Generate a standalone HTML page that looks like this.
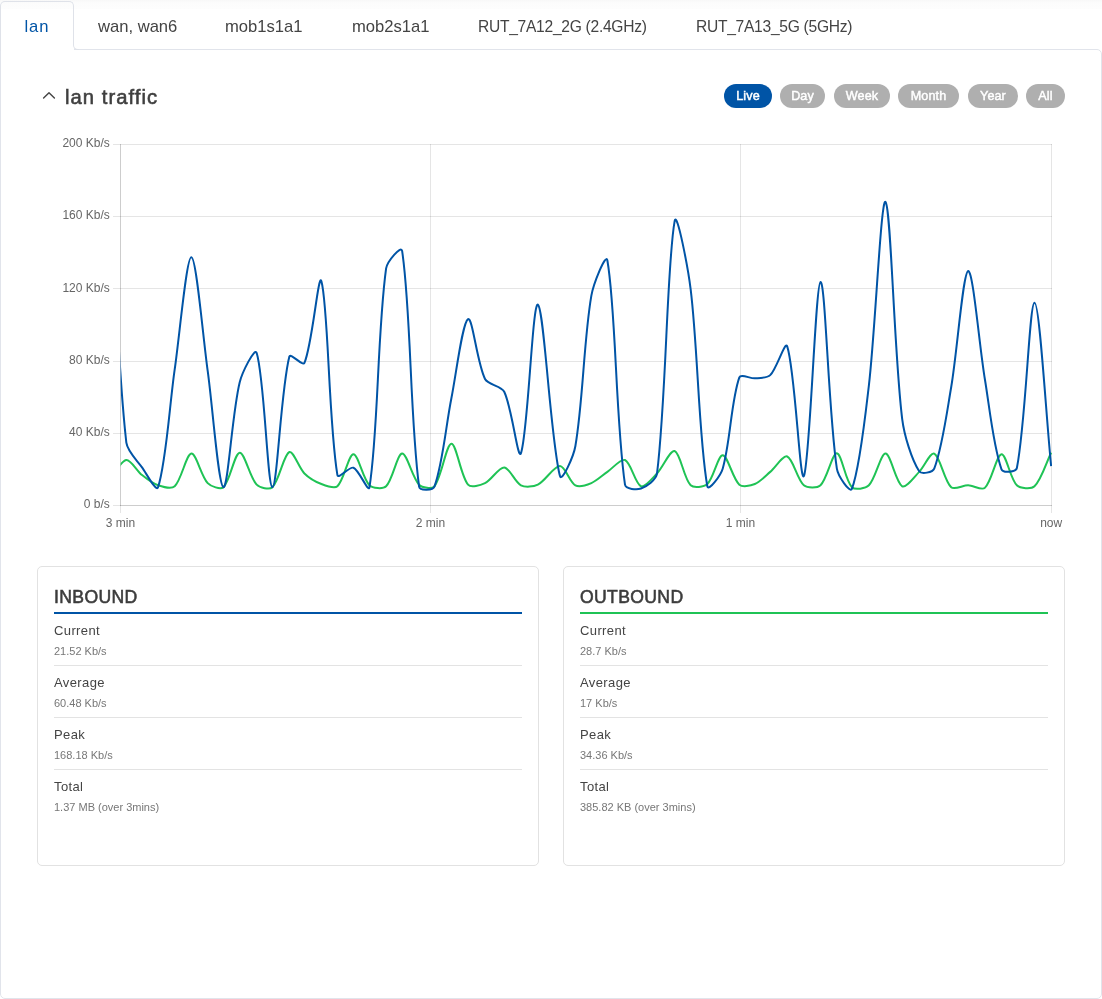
<!DOCTYPE html>
<html lang="en">
<head>
<meta charset="utf-8">
<title>lan traffic</title>
<style>
*{box-sizing:border-box;margin:0;padding:0}
html,body{width:1102px;height:999px;background:#fff;overflow:hidden}
body{position:relative;will-change:transform;font-family:"Liberation Sans","DejaVu Sans",sans-serif;color:#444}
.topshade{position:absolute;left:0;top:0;width:1102px;height:9px;background:linear-gradient(#f8f8f8,#fcfcfc 30%,#fdfdfd)}
.tabs{position:absolute;left:0;top:1px;height:49px;width:1102px;white-space:nowrap}
.tab{position:absolute;top:0;height:49px;line-height:51px;font-size:16.6px;color:#444;white-space:nowrap}
.tab.rut{font-size:15.6px;letter-spacing:-.28px}
.tab.active{left:0;width:74px;border:1px solid #dfe2e9;border-bottom:none;border-radius:5px 5px 0 0;background:linear-gradient(transparent 10px,#fff 10px);color:#0054a6;z-index:3;height:50px}
.tab.active span{position:absolute;left:23.4px;top:-1px;letter-spacing:1px}
.j1{position:absolute;left:73px;top:45px;width:1px;height:6px;background:#fff;z-index:5}
.j2{position:absolute;left:73px;top:44px;width:6px;height:6px;border-left:1px solid #dfe2e9;border-bottom:1px solid #dfe2e9;border-bottom-left-radius:5px;z-index:6}
.panel{position:absolute;left:0;top:49px;width:1102px;height:950px;border:1px solid #e1e4eb;border-radius:0 5px 5px 5px;background:#fff;z-index:1}
.h{position:absolute;left:65px;top:84px;font-size:20.2px;font-weight:normal;-webkit-text-stroke:.6px #3f3f3f;letter-spacing:1.05px;color:#3f3f3f;line-height:26px;z-index:4;white-space:nowrap}
.chev{position:absolute;left:41px;top:89px;z-index:4}
.btn{position:absolute;top:84px;height:24px;border-radius:12px;background:#afafaf;color:#fff;font-size:12.6px;font-weight:normal;-webkit-text-stroke:.45px #fff;letter-spacing:.1px;text-align:center;line-height:25px;z-index:4}
.btn.on{background:#0054a6}
svg.chart{position:absolute;left:0;top:0;z-index:4}
.card{position:absolute;top:566px;width:502px;height:300px;border:1px solid #e2e2e2;border-radius:5px;background:#fff;z-index:4}
.card h3{position:absolute;left:16px;top:19px;font-size:17.6px;font-weight:normal;-webkit-text-stroke:.55px #3c3c3c;letter-spacing:.35px;color:#3c3c3c;line-height:22px;white-space:nowrap}
.card .rule{position:absolute;left:16px;right:16px;top:45px;height:2px;background:#0054a6}
.card.out .rule{background:#1fc355}
.row{position:absolute;left:16px;right:16px;height:52px;border-bottom:1px solid #e3e3e3}
.row.last{border-bottom:none}
.row .k{position:absolute;left:0;top:8px;font-size:13px;letter-spacing:.38px;line-height:18px;color:#444;white-space:nowrap}
.row .v{position:absolute;left:0;top:30px;font-size:11px;line-height:14px;color:#777;white-space:nowrap}
</style>
</head>
<body>
<div class="topshade"></div>
<div class="tabs">
  <div class="tab active"><span>lan</span></div>
  <div class="tab" style="left:98px">wan, wan6</div>
  <div class="tab" style="left:225px">mob1s1a1</div>
  <div class="tab" style="left:352px">mob2s1a1</div>
  <div class="tab rut" style="left:478px">RUT_7A12_2G (2.4GHz)</div>
  <div class="tab rut" style="left:696px">RUT_7A13_5G (5GHz)</div>
</div>
<div class="panel"></div>
<div class="j1"></div><div class="j2"></div>
<svg class="chev" width="16" height="14" viewBox="0 0 16 14"><path d="M2.6 9.1 L8 3.7 L13.4 9.1" fill="none" stroke="#444" stroke-width="1.4" stroke-linecap="round" stroke-linejoin="round"/></svg>
<div class="h">lan traffic</div>
<div class="btn on" style="left:724px;width:48px">Live</div>
<div class="btn" style="left:780px;width:45px">Day</div>
<div class="btn" style="left:834px;width:56px">Week</div>
<div class="btn" style="left:898px;width:61px">Month</div>
<div class="btn" style="left:968px;width:50px">Year</div>
<div class="btn" style="left:1026px;width:39px">All</div>

<svg class="chart" width="1102" height="560" viewBox="0 0 1102 560">
  <defs><clipPath id="ca"><rect x="120.6" y="140" width="931.4" height="370"/></clipPath></defs>
  <g stroke="#000" stroke-opacity="0.1" stroke-width="1" shape-rendering="crispEdges">
    <line x1="113" y1="144.5" x2="1052" y2="144.5"/>
    <line x1="113" y1="216.5" x2="1052" y2="216.5"/>
    <line x1="113" y1="288.5" x2="1052" y2="288.5"/>
    <line x1="113" y1="361.5" x2="1052" y2="361.5"/>
    <line x1="113" y1="433.5" x2="1052" y2="433.5"/>
    <line x1="113" y1="505.5" x2="1052" y2="505.5"/>
    <line x1="120.5" y1="144" x2="120.5" y2="513"/>
    <line x1="430.5" y1="144" x2="430.5" y2="513"/>
    <line x1="740.5" y1="144" x2="740.5" y2="513"/>
    <line x1="1051.5" y1="144" x2="1051.5" y2="513"/>
    <line x1="120.5" y1="144" x2="120.5" y2="506"/>
    <line x1="120" y1="505.5" x2="1052" y2="505.5"/>
  </g>
  <g clip-path="url(#ca)" fill="none" stroke-width="2" stroke-linejoin="round">
    <path stroke="#1fc355" d="M110.40,478.00C115.18,472.61 121.35,460.48 126.34,460.02C130.84,459.60 136.96,471.02 142.03,475.07C146.47,478.61 152.83,483.53 158.05,485.32C162.63,486.90 171.58,489.26 174.70,486.28C181.57,479.75 186.20,454.11 191.36,453.61C196.10,453.15 201.21,476.27 207.69,483.08C210.82,486.36 220.53,489.97 223.39,487.25C230.13,480.84 234.59,453.05 239.72,452.65C244.59,452.28 249.89,477.47 256.70,484.68C259.69,487.85 269.56,490.08 272.40,487.25C279.36,480.28 283.62,454.49 289.37,452.01C293.23,450.35 298.98,468.02 304.43,473.47C308.58,477.63 315.93,481.92 321.40,484.04C325.83,485.76 334.43,489.06 337.42,486.28C344.04,480.13 348.57,454.40 353.43,454.25C358.18,454.11 362.81,478.82 369.45,485.32C372.62,488.43 383.02,489.28 386.11,486.28C392.83,479.76 397.10,453.86 402.12,453.61C407.00,453.38 412.35,477.85 419.10,484.68C422.03,487.65 431.98,489.38 434.41,486.28C441.67,477.08 446.26,443.93 451.39,443.68C456.35,443.45 460.76,476.15 468.05,484.68C470.85,487.97 480.60,485.19 485.02,483.08C491.46,480.01 498.82,467.05 504.24,467.39C509.59,467.72 514.94,482.26 520.90,485.32C525.03,487.45 533.53,486.82 537.87,484.68C545.25,481.05 553.91,466.00 559.97,466.11C565.15,466.19 569.67,482.25 575.35,485.32C579.08,487.34 587.01,484.91 591.36,483.08C596.62,480.87 602.54,475.19 607.38,471.87C612.63,468.27 620.88,458.25 625.00,460.02C630.97,462.58 635.25,483.86 641.01,486.28C644.86,487.90 652.81,477.89 657.03,473.47C662.90,467.32 670.31,449.52 674.64,451.05C680.40,453.08 683.86,478.46 690.66,485.32C693.66,488.36 704.06,487.10 707.32,484.04C713.67,478.07 717.97,455.12 722.69,455.21C727.58,455.31 732.73,478.75 739.35,484.68C742.38,487.40 750.76,485.74 754.86,484.04C760.03,481.90 765.76,475.68 770.23,471.87C775.46,467.42 783.10,454.85 787.21,456.50C793.19,458.89 797.20,479.56 803.87,485.32C807.20,488.21 817.39,488.37 820.52,485.32C827.29,478.76 832.23,453.01 836.86,453.29C841.64,453.59 845.33,480.66 851.91,487.25C854.94,490.27 865.63,488.58 868.89,485.32C875.72,478.49 880.61,453.47 885.54,453.61C890.60,453.76 895.92,482.88 902.20,486.28C906.01,488.35 914.52,476.62 919.18,471.87C924.13,466.82 930.52,451.83 934.23,453.61C940.13,456.45 944.20,480.70 951.21,487.25C954.39,490.21 963.10,485.23 968.18,485.32C973.19,485.42 981.74,490.77 984.84,487.89C991.74,481.45 996.50,454.65 1001.50,454.25C1006.11,453.88 1010.31,478.96 1016.87,485.32C1020.21,488.56 1031.20,489.42 1034.49,486.28C1041.48,479.62 1046.15,462.74 1051.14,452.65"/>
    <path stroke="#0054a6" d="M110.40,192.00C115.18,267.22 117.84,368.72 126.34,442.72C127.32,451.33 136.95,460.25 142.03,467.39C146.46,473.61 156.32,492.43 158.05,487.25C166.12,463.03 169.58,404.72 174.70,369.37C179.58,335.72 186.44,257.03 191.36,257.26C196.34,257.51 202.94,336.84 207.69,370.97C212.55,405.83 218.35,485.48 223.39,487.25C227.96,488.84 232.14,412.75 239.72,382.18C242.13,372.49 254.74,346.74 256.70,353.04C264.54,378.26 267.43,486.71 272.40,487.25C277.24,487.77 280.82,389.73 289.37,356.56C290.43,352.44 302.85,366.67 304.43,362.97C312.46,344.09 318.43,271.19 321.40,281.29C328.33,304.82 328.61,423.80 337.42,475.07C338.22,479.72 349.48,466.21 353.43,467.71C359.09,469.86 368.44,493.42 369.45,487.25C378.24,433.65 377.26,332.45 386.11,268.48C387.06,261.53 401.21,244.87 402.12,250.86C411.11,310.31 410.00,420.19 419.10,486.60C419.69,490.91 433.01,490.46 434.41,486.60C442.69,463.94 446.07,424.68 451.39,398.20C456.16,374.42 462.35,322.34 468.05,319.08C472.44,316.58 477.10,363.07 485.02,378.98C487.96,384.88 501.38,385.86 504.24,391.79C512.14,408.16 517.88,461.10 520.90,453.29C527.97,434.96 532.43,301.50 537.87,304.67C544.16,308.33 550.56,440.46 559.97,476.03C561.80,482.94 573.64,456.05 575.35,446.25C583.06,401.95 583.71,340.09 591.36,295.70C593.32,284.35 605.90,252.14 607.38,260.47C615.99,308.84 615.60,420.93 625.00,484.68C625.69,489.35 636.90,489.97 641.01,488.53C646.51,486.60 656.22,479.89 657.03,473.47C666.31,399.65 666.74,264.34 674.64,221.07C676.83,209.09 688.09,268.47 690.66,289.30C697.90,348.04 698.72,438.16 707.32,486.28C708.33,491.98 720.76,475.24 722.69,468.67C730.37,442.57 731.08,400.59 739.35,377.38C740.73,373.49 750.25,378.68 754.86,378.34C759.52,378.00 767.13,378.21 770.23,375.14C776.84,368.60 785.15,340.14 787.21,346.31C795.24,370.41 799.85,483.79 803.87,476.03C809.85,464.48 815.48,283.05 820.52,281.93C825.38,280.84 828.56,413.94 836.86,468.67C837.97,476.02 850.05,493.68 851.91,488.85C859.66,468.70 865.23,416.61 868.89,385.39C875.32,330.51 880.96,197.23 885.54,201.85C890.96,207.32 894.14,354.48 902.20,419.02C904.23,435.29 911.66,459.58 919.18,471.23C921.27,474.47 932.74,472.58 934.23,468.67C942.35,447.31 946.97,411.64 951.21,386.99C957.16,352.36 962.96,272.28 968.18,271.04C973.05,269.88 979.41,346.67 984.84,378.98C989.40,406.15 993.27,446.44 1001.50,469.31C1002.88,473.15 1016.03,472.27 1016.87,468.03C1025.93,422.30 1029.32,303.04 1034.49,302.75C1039.60,302.46 1046.15,417.10 1051.14,466.11"/>
  </g>
  <g font-family="Liberation Sans, sans-serif" font-size="12" fill="#666" text-anchor="end">
    <text x="109.8" y="147">200 Kb/s</text>
    <text x="109.8" y="219">160 Kb/s</text>
    <text x="109.8" y="292">120 Kb/s</text>
    <text x="109.8" y="364">80 Kb/s</text>
    <text x="109.8" y="436">40 Kb/s</text>
    <text x="109.8" y="508">0 b/s</text>
  </g>
  <g font-family="Liberation Sans, sans-serif" font-size="12" fill="#666" text-anchor="middle">
    <text x="120.5" y="527">3 min</text>
    <text x="430.5" y="527">2 min</text>
    <text x="740.5" y="527">1 min</text>
    <text x="1051.2" y="527">now</text>
  </g>
</svg>

<div class="card in" style="left:37px">
  <h3>INBOUND</h3><div class="rule"></div>
  <div class="row" style="top:47px"><div class="k">Current</div><div class="v">21.52 Kb/s</div></div>
  <div class="row" style="top:99px"><div class="k">Average</div><div class="v">60.48 Kb/s</div></div>
  <div class="row" style="top:151px"><div class="k">Peak</div><div class="v">168.18 Kb/s</div></div>
  <div class="row last" style="top:203px"><div class="k">Total</div><div class="v">1.37 MB (over 3mins)</div></div>
</div>
<div class="card out" style="left:563px">
  <h3>OUTBOUND</h3><div class="rule"></div>
  <div class="row" style="top:47px"><div class="k">Current</div><div class="v">28.7 Kb/s</div></div>
  <div class="row" style="top:99px"><div class="k">Average</div><div class="v">17 Kb/s</div></div>
  <div class="row" style="top:151px"><div class="k">Peak</div><div class="v">34.36 Kb/s</div></div>
  <div class="row last" style="top:203px"><div class="k">Total</div><div class="v">385.82 KB (over 3mins)</div></div>
</div>
</body>
</html>
